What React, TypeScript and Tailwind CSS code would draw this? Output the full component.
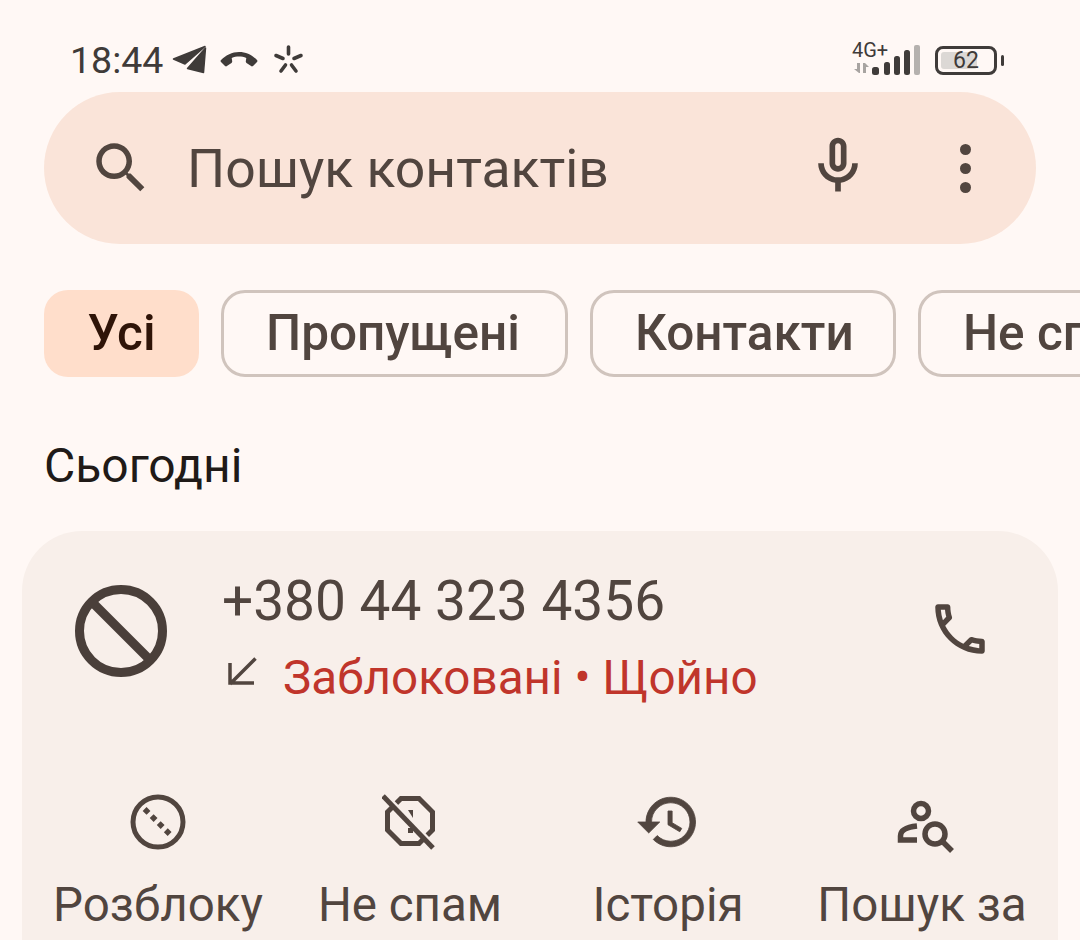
import React from 'react';

const BROWN = '#51453f';

const Icon: React.FC<{ size: number; d: string; className?: string; thick?: boolean }> = ({ size, d, className, thick }) => (
  <svg
    width={size}
    height={size}
    viewBox="0 0 24 24"
    fill={BROWN}
    stroke={thick ? BROWN : 'none'}
    strokeWidth={thick ? 0.3 : 0}
    className={className}
  >
    <path d={d} />
  </svg>
);

const SEARCH =
  'M15.5 14h-.79l-.28-.27C15.41 12.59 16 11.11 16 9.5 16 5.91 13.09 3 9.5 3S3 5.91 3 9.5 5.91 16 9.5 16c1.61 0 3.09-.59 4.23-1.57l.27.28v.79l5 4.99L20.49 19l-4.99-5zm-6 0C7.01 14 5 11.99 5 9.5S7.01 5 9.5 5 14 7.01 14 9.5 11.99 14 9.5 14z';
const MIC =
  'M12 14c1.66 0 3-1.34 3-3V5c0-1.66-1.34-3-3-3S9 3.34 9 5v6c0 1.66 1.34 3 3 3zm-1-9c0-.55.45-1 1-1s1 .45 1 1v6c0 .55-.45 1-1 1s-1-.45-1-1V5zm6 6c0 2.76-2.24 5-5 5s-5-2.24-5-5H5c0 3.53 2.61 6.43 6 6.92V21h2v-3.08c3.39-.49 6-3.39 6-6.92h-2z';
const HISTORY =
  'M13 3c-4.97 0-9 4.03-9 9H1l3.89 3.89.07.14L9 12H6c0-3.87 3.13-7 7-7s7 3.13 7 7-3.13 7-7 7c-1.93 0-3.68-.79-4.94-2.06l-1.42 1.42C8.27 19.99 10.51 21 13 21c4.97 0 9-4.03 9-9s-4.03-9-9-9zm-1 5v5l4.28 2.54.72-1.21-3.5-2.08V8H12z';
const CALL =
  'M6.54 5c.06.89.21 1.76.45 2.59l-1.2 1.2c-.41-1.2-.67-2.47-.76-3.79h1.51m9.86 12.02c.85.24 1.72.39 2.6.45v1.49c-1.32-.09-2.59-.35-3.8-.75l1.2-1.19M7.5 3H4c-.55 0-1 .45-1 1 0 9.39 7.61 17 17 17 .55 0 1-.45 1-1v-3.49c0-.55-.45-1-1-1-1.24 0-2.45-.2-3.57-.57-.1-.04-.21-.05-.31-.05-.26 0-.51.1-.71.29l-2.2 2.2c-2.83-1.45-5.15-3.76-6.59-6.59l2.2-2.2c.28-.28.36-.67.25-1.02C8.7 6.45 8.5 5.25 8.5 4c0-.55-.45-1-1-1z';

const StatusLeft = () => (
  <div className="flex items-center">
    <span className="mt-[2px] text-[37.5px] leading-none text-[#3f3b39]">18:44</span>
    {/* telegram */}
    <svg width="35" height="30" viewBox="0 0 35 30" className="ml-[9px]" fill="#3f3b39" stroke="#3f3b39" strokeWidth="1.5" strokeLinejoin="round">
      <path d="M1.500 14 33 1.500 13 19z" />
      <path d="M33.500 3 31.500 27.500 15.500 23.500z" />
    </svg>
    {/* call in progress */}
    <svg width="38" height="18" viewBox="0 0 38 18" className="ml-[13px]" fill="#3f3b39">
      <path d="M19 1c7 0 13 3 18 8 .6.6.6 1.300 0 1.900l-4 4c-.6.6-1.300.6-1.900.2l-4.600-3.200c-.6-.4-.8-1-.7-1.600l.5-3.300C24 6 21.500 5.600 19 5.600S14 6 11.700 7l.5 3.300c.1.6-.1 1.200-.7 1.600l-4.600 3.200c-.6.4-1.300.4-1.900-.2l-4-4c-.6-.6-.6-1.300 0-1.900C6 4 12 1 19 1z" />
    </svg>
    {/* kyivstar star */}
    <svg width="32" height="32" viewBox="0 0 32 32" className="ml-[15px]" stroke="#3f3b39" strokeWidth="3.600" strokeLinecap="round">
      <path d="M15.500 3v7M3 11.500l7 3M28 11.500l-7 3M8 27l4.500-6M23 27l-4.500-6" />
    </svg>
  </div>
);

const StatusRight = () => (
  <div className="flex items-center">
    <div className="-mt-[6px] flex w-[36px] flex-col items-start">
      <span className="text-[20px] leading-[18px] text-[#3f3b39]">4G+</span>
      <svg width="18" height="10" viewBox="0 0 18 10" fill="#a8a4a1" className="mt-[4px] ml-[2px]">
        <path d="M0 6h3V0h3v10H5L0 6zM15 4h-3v6H9V0h2l4 4z" />
      </svg>
    </div>
    <svg width="48" height="30" viewBox="0 0 48 30" className="-ml-[16px]">
      <rect x="0" y="22" width="7" height="8" rx="2.500" fill="#3f3b39" />
      <rect x="12" y="17" width="6" height="13" rx="2.500" fill="#3f3b39" />
      <rect x="22" y="11" width="6" height="19" rx="2.500" fill="#3f3b39" />
      <rect x="32" y="5" width="6" height="25" rx="2.500" fill="#3f3b39" />
      <rect x="42" y="0" width="6" height="30" rx="2" fill="#b5b1ae" />
    </svg>
    <div className="relative ml-[15px] flex h-[29px] w-[62px] items-center rounded-[8px] border-[3px] border-[#3f3b39] p-[3px]">
      <div className="h-full w-[36px] rounded-[3px] bg-[#dcd8d5]" />
      <span className="absolute inset-0 flex items-center justify-center text-[23px] leading-none text-[#3f3b39]">62</span>
    </div>
    <div className="ml-[4px] h-[11px] w-[3px] rounded-full bg-[#3f3b39]" />
  </div>
);

const Chip: React.FC<{ label: string; w: string }> = ({ label, w }) => (
  <div
    className={`flex h-[87px] shrink-0 items-center rounded-[24px] border-[3px] border-[#d0c4bd] pl-[42px] text-[49.5px] font-medium whitespace-nowrap text-[#51453f] ${w}`}
  >
    {label}
  </div>
);

const Action: React.FC<{ label: string; w: string; icon: React.ReactNode }> = ({ label, w, icon }) => (
  <div className={`flex shrink-0 flex-col items-center ${w}`}>
    <div className="flex h-[64px] items-center justify-center">{icon}</div>
    <span className="mt-[23px] text-[47.5px] leading-[56px] whitespace-nowrap text-[#51453f]">{label}</span>
  </div>
);

export default function App() {
  return (
    <div
      className="flex h-[940px] w-[1080px] flex-col overflow-hidden bg-[#fff8f5]"
      style={{ fontFamily: 'Roboto, "Noto Sans", sans-serif' }}
    >
      {/* Status bar */}
      <div className="flex h-[92px] shrink-0 items-center justify-between pt-[28px] pr-[76px] pl-[70px]">
        <StatusLeft />
        <StatusRight />
      </div>

      {/* Search */}
      <div className="mx-[44px] flex h-[152px] shrink-0 items-center rounded-full bg-[#fae4d9] pr-[40px] pl-[44px]">
        <Icon size={66} d={SEARCH} />
        <span className="mt-[3px] ml-[33px] text-[53.5px] text-[#51453f]">Пошук контактів</span>
        <Icon size={68} d={MIC} className="ml-auto -mt-[4px]" />
        <div className="mr-[25px] ml-[88px] flex flex-col gap-[8px]">
          <span className="h-[11px] w-[11px] rounded-full bg-[#51453f]" />
          <span className="h-[11px] w-[11px] rounded-full bg-[#51453f]" />
          <span className="h-[11px] w-[11px] rounded-full bg-[#51453f]" />
        </div>
      </div>

      {/* Filter chips */}
      <div className="mt-[46px] ml-[44px] flex shrink-0 gap-[22px]">
        <div className="flex h-[87px] w-[155px] shrink-0 items-center justify-center rounded-[24px] bg-[#ffdecb] text-[49.5px] font-medium text-[#2f1408]">
          Усі
        </div>
        <Chip label="Пропущені" w="w-[347px]" />
        <Chip label="Контакти" w="w-[306px]" />
        <Chip label="Не спам" w="w-[300px]" />
      </div>

      <div className="mt-[58px] ml-[44px] shrink-0 text-[48px] leading-[62px] text-[#201a17]">Сьогодні</div>

      {/* Call card */}
      <div className="mt-[34px] ml-[22px] flex w-[1036px] flex-1 flex-col rounded-t-[60px] bg-[#f8efea]">
        <div className="flex pt-[38px] pr-[65px] pl-[53px]">
          <svg width="92" height="92" viewBox="0 0 92 92" fill="none" stroke="#4a3f3a" strokeWidth="9" className="mt-[16px] shrink-0">
            <circle cx="46" cy="46" r="41.500" />
            <path d="M17 17l58 58" />
          </svg>
          <div className="ml-[55px] flex-1">
            <div className="text-[55px] leading-[64px] text-[#51453f]">+380 44 323 4356</div>
            <div className="mt-[16px] flex items-center">
              <svg width="32" height="32" viewBox="0 0 32 32" fill="none" stroke="#51453f" strokeWidth="3.500" className="-mt-[10px] mr-[24px] ml-[5px]">
                <path d="M28.500 1.500 3 27M3 6v20h24" />
              </svg>
              <span className="text-[47.6px] leading-[58px] text-[#c0352b]">Заблоковані • Щойно</span>
            </div>
          </div>
          <Icon size={66} d={CALL} className="mt-[27px] shrink-0" />
        </div>

        <div className="mt-[83px] flex">
          <Action
            label="Розблоку"
            w="w-[272px]"
            icon={
              <svg width="56" height="56" viewBox="0 0 56 56" fill="none" stroke="#51453f" strokeWidth="5">
                <circle cx="28" cy="28" r="25" />
                <path d="M14.600 15l25 25" strokeDasharray="5.500 4.500" strokeWidth="5.500" />
              </svg>
            }
          />
          <Action
            label="Не спам"
            w="w-[232px]"
            icon={
              <svg width="56" height="56" viewBox="0 0 56 56" fill="none" stroke="#51453f" strokeWidth="5">
                <path d="M19 4.500h18L50.500 18v18L37 49.500H19L5.500 36V18z" />
                <path d="M26 16h5v8z" fill="#51453f" stroke="none" />
                <path d="M26 34h5v5h-5z" fill="#51453f" stroke="none" />
                <path d="M3 1.500l50 52" stroke="#f8efea" strokeWidth="6" />
                <path d="M1 2l50 52" />
              </svg>
            }
          />
          <Action label="Історія" w="w-[284px]" icon={<Icon size={66} d={HISTORY} thick />} />
          <Action
            label="Пошук за"
            w="w-[224px]"
            icon={
              <svg width="58" height="56" viewBox="0 0 58 56" fill="none" stroke="#51453f" strokeWidth="5.500" className="overflow-visible">
                <circle cx="28" cy="17" r="7.500" />
                <path d="M24 46H7.500v-4c0-6 6.500-9 16.500-10" />
                <circle cx="42" cy="40" r="10" />
                <path d="M49 47l10 10" />
              </svg>
            }
          />
        </div>
      </div>
    </div>
  );
}
